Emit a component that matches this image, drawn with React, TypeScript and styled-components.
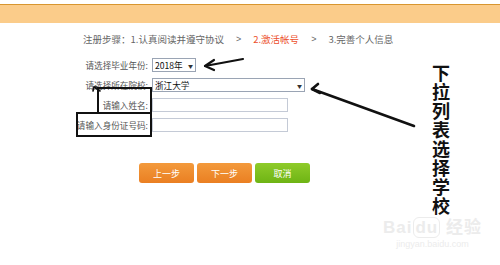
import React from 'react';
import styled, { createGlobalStyle } from 'styled-components';

const GlobalStyle = createGlobalStyle`
  html, body {
    margin: 0;
    padding: 0;
    background: #ffffff;
  }
  body {
    font-family: "Noto Sans CJK SC", "Liberation Sans", sans-serif;
  }
`;

interface Field {
  label: string;
  kind: 'select' | 'input';
  value?: string;
  width: number;
  frame?: { top: number; left: number; bottom: number };
}

const fields: Field[] = [
  { label: '请选择毕业年份:', kind: 'select', value: '2018年', width: 44 },
  { label: '请选择所在院校:', kind: 'select', value: '浙江大学', width: 153 },
  { label: '请输入姓名:', kind: 'input', width: 136, frame: { top: -11, left: 97, bottom: -2 } },
  { label: '请输入身份证号码:', kind: 'input', width: 136, frame: { top: -6, left: 76, bottom: -5 } },
];

const App = () => (
  <Page>
    <GlobalStyle />
    <TopBar />
    <Steps>
      <span>注册步骤：</span>
      <Step>1.认真阅读并遵守协议</Step>
      <Sep>&gt;</Sep>
      <Step active>2.激活帐号</Step>
      <Sep>&gt;</Sep>
      <Step>3.完善个人信息</Step>
    </Steps>
    <Form>
      {fields.map((f) => (
        <React.Fragment key={f.label}>
          <Label>
            {f.label}
            {f.frame && (
              <Frame
                style={{ top: f.frame.top, left: f.frame.left, bottom: f.frame.bottom }}
              />
            )}
          </Label>
          {f.kind === 'select' ? (
            <Select width={f.width}>
              <span>{f.value}</span>
              <Caret>▼</Caret>
            </Select>
          ) : (
            <Input width={f.width} />
          )}
        </React.Fragment>
      ))}
    </Form>
    <Buttons>
      <Button tone="orange">上一步</Button>
      <Button tone="orange">下一步</Button>
      <Button tone="green">取消</Button>
    </Buttons>

    <Arrows width="500" height="265" viewBox="0 0 500 265">
      <g stroke="#111" fill="none" strokeLinecap="round" strokeLinejoin="round">
        <path d="M243 59 L205 66" strokeWidth="2.2" />
        <path d="M214 60 L205 66 L214 70" strokeWidth="2.2" />
        <path d="M414 126 L312 89" strokeWidth="2.6" />
        <path d="M318 84 L312 89 L320 93" strokeWidth="2.6" />
        <path d="M100 91 L94 87" strokeWidth="1.6" />
        <path d="M93 91 L94 87 L97 87" strokeWidth="1.6" />
      </g>
    </Arrows>
    <Caption>下拉列表选择学校</Caption>
    <Watermark>
      <Brand>Bai<Du>du</Du> 经验</Brand>
      <Site>jingyan.baidu.com</Site>
    </Watermark>
  </Page>
);

const Page = styled.div`
  position: relative;
  width: 500px;
  height: 265px;
  overflow: hidden;
  background: #ffffff;
`;

const TopBar = styled.div`
  margin-top: 4px;
  height: 18px;
  border-top: 1.5px solid #d8962f;
  background: #fbcc8a;
`;

const Steps = styled.div`
  display: flex;
  align-items: center;
  margin-top: 9px;
  padding-left: 83px;
  height: 14px;
  font-size: 9.5px;
  color: #666666;
  white-space: nowrap;
`;

const Step = styled.span<{ active?: boolean }>`
  color: ${({ active }) => (active ? '#ec4f2d' : '#666666')};
`;

const Sep = styled.span`
  margin: 0 12px;
  font-family: "Liberation Sans", sans-serif;
  font-size: 9px;
`;

const Form = styled.div`
  display: grid;
  grid-template-columns: 150px auto;
  grid-auto-rows: 14px;
  row-gap: 6px;
  column-gap: 2px;
  margin-top: 12px;
  align-items: center;
`;

const Label = styled.div`
  position: relative;
  text-align: right;
  font-size: 8.6px;
  line-height: 14px;
  color: #555555;
  padding-right: 2px;
  white-space: nowrap;
`;

const Frame = styled.div`
  position: absolute;
  right: -2px;
  border: 2px solid #111111;
  pointer-events: none;
`;

const Select = styled.div<{ width: number }>`
  box-sizing: border-box;
  display: flex;
  align-items: center;
  justify-content: space-between;
  width: ${({ width }) => width}px;
  height: 14px;
  padding: 0 2px;
  border: 1px solid #9aa4b4;
  background: #ffffff;
  font-size: 8.6px;
  color: #111111;
  white-space: nowrap;
`;

const Caret = styled.span`
  font-size: 5px;
  color: #333333;
  margin-left: 3px;
`;

const Input = styled.div<{ width: number }>`
  box-sizing: border-box;
  width: ${({ width }) => width}px;
  height: 14px;
  border: 1px solid #c4cad6;
  background: #ffffff;
`;

const Buttons = styled.div`
  display: flex;
  gap: 3px;
  margin-top: 31px;
  padding-left: 139px;
`;

const Button = styled.div<{ tone: 'orange' | 'green' }>`
  width: 55px;
  height: 20px;
  display: flex;
  align-items: center;
  justify-content: center;
  border-radius: 3px;
  font-size: 9px;
  color: #ffffff;
  background: ${({ tone }) =>
    tone === 'green'
      ? 'linear-gradient(#8fcb2a, #6eb414)'
      : 'linear-gradient(#f39a3c, #ea7f22)'};
`;

const Arrows = styled.svg`
  position: absolute;
  left: 0;
  top: 0;
  pointer-events: none;
`;

const Caption = styled.div`
  position: absolute;
  left: 431px;
  top: 63px;
  width: 20px;
  font-size: 18px;
  line-height: 19px;
  font-weight: 700;
  color: #111111;
  text-align: center;
  word-break: break-all;
`;

const Watermark = styled.div`
  position: absolute;
  left: 383px;
  top: 218px;
  display: flex;
  flex-direction: column;
  align-items: center;
  color: #ececec;
`;

const Brand = styled.div`
  font-family: "Liberation Sans", "Noto Sans CJK SC", sans-serif;
  font-size: 17px;
  font-weight: 700;
  line-height: 20px;
  letter-spacing: 1px;
`;

const Du = styled.span`
  border: 1.5px solid #ececec;
  border-radius: 6px;
  padding: 0 1px;
  margin-left: 1px;
`;

const Site = styled.div`
  font-family: "Liberation Sans", sans-serif;
  font-size: 9px;
  line-height: 12px;
`;

export default App;
